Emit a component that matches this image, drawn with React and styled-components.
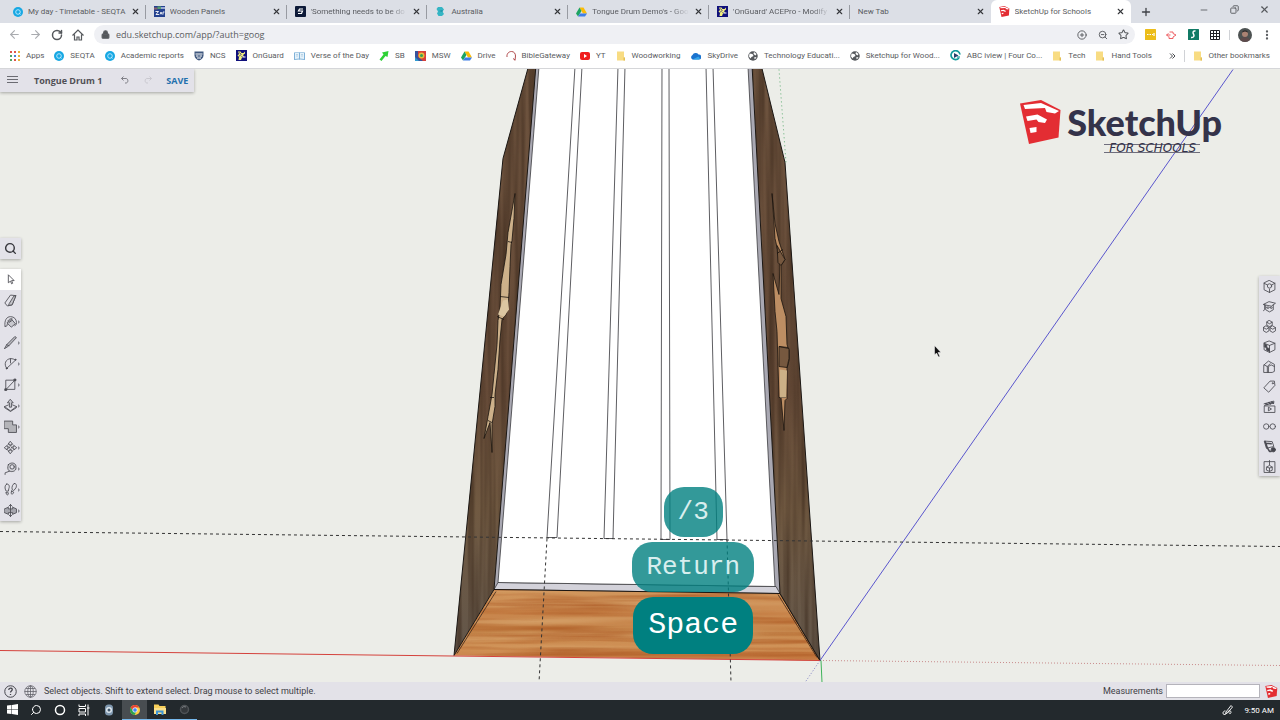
import React from 'react';
import styled, { createGlobalStyle } from 'styled-components';
import {
  ArrowLeft,
  ArrowRight,
  RotateCw,
  Lock,
  CirclePlus,
  ZoomOut,
  Star,
  Plus,
  X,
  Minus,
  Copy,
  EllipsisVertical,
  Search,
} from 'lucide-react';

const GlobalStyle = createGlobalStyle`
  * { box-sizing: border-box; }
  body {
    margin: 0;
    font-family: Roboto, 'Open Sans', sans-serif;
    font-size: 8px;
    color: #5a5c61;
    overflow: hidden;
  }
  button, input { font: inherit; color: inherit; margin: 0; padding: 0; border: 0; background: none; }
  a { color: inherit; text-decoration: none; }
  svg { display: block; flex: none; }
`;

/* ---------- small pictures ---------- */

function SeqtaIcon() {
  return (
    <svg width='10' height='10' viewBox='0 0 20 20'>
      <circle cx='10' cy='10' r='10' fill='#17a8e3' />
      <circle cx='10' cy='10' r='4.6' fill='none' stroke='#bfeaff' strokeWidth='1.8' />
      <path d='M12 12l3 3' stroke='#bfeaff' strokeWidth='1.8' />
    </svg>
  );
}

function ZartIcon() {
  return (
    <svg width='11' height='11' viewBox='0 0 22 22'>
      <rect width='22' height='22' fill='#23418f' />
      <path d='M0 3h7v4H0z' fill='#8a5f6d' />
      <path d='M7 1h7v5H7z' fill='#55a06f' />
      <path d='M14 2h8v4h-8z' fill='#9aa8d4' />
      <path d='M3 11h6l-5 6h6M12 17l2-5 2 5M18 17v-5h3' fill='none' stroke='#fff' strokeWidth='1.8' />
    </svg>
  );
}

function StileIcon() {
  return (
    <svg width='11' height='11' viewBox='0 0 22 22'>
      <rect width='22' height='22' rx='2' fill='#0d1a38' />
      <path d='M16 6H9l-2 4h8l-2 5H6' fill='none' stroke='#fff' strokeWidth='2.4' />
    </svg>
  );
}

function AustraliaIcon() {
  return (
    <svg width='11' height='11' viewBox='0 0 22 22'>
      <path d='M6 2h8l4 5-3 4 3 5-4 4H7l-3-5 2-4-3-5z' fill='#35b5c4' />
      <path d='M8 10l7-2v4z' fill='#1d8fa5' />
    </svg>
  );
}

function DriveIcon() {
  return (
    <svg width='11' height='10' viewBox='0 0 22 20'>
      <path d='M7 1h8l7 12h-8z' fill='#fbbc05' />
      <path d='M7 1l4 7-7 11-4-6z' fill='#1da462' />
      <path d='M8 13h14l-4 6H4z' fill='#3f7ee8' />
    </svg>
  );
}

function GuardIcon() {
  return (
    <svg width='11' height='11' viewBox='0 0 22 22'>
      <rect width='22' height='22' fill='#10107c' />
      <path d='M4 3h5l2 3h4l3-3v4l-4 3 2 3-4 2-2 5H5l1-6-3-3 3-3z' fill='#f3ef7c' />
      <path d='M7 5l3 4-4 4M11 12l5 5' fill='none' stroke='#10107c' strokeWidth='1.6' />
      <path d='M13 13h6v2h-6z' fill='#fff' />
    </svg>
  );
}

function SketchupMark({ size }) {
  return (
    <svg width={size} height={size} viewBox='0 0 84 88'>
      <path d='M0 7L42 0l39 20-4 55-59 13z' fill='#e32d33' />
      <path d='M7 10l35-4 36 16-8 5-17-3-3-8-40 2z' fill='#fff' />
      <path d='M12 33l23-4 19 10-4 7-13-2-4-5-18 3z' fill='#fff' />
      <path d='M19 56l14-2v10l-12 2z' fill='#fff' />
    </svg>
  );
}

function AppsIcon() {
  const fills = ['#e0544a', '#e0544a', '#e9b13c', '#4fa463', '#4c7fd8', '#e9b13c', '#4fa463', '#e0544a', '#e9b13c'];
  return (
    <svg width='10' height='10' viewBox='0 0 10 10'>
      {fills.map((fill, i) => (
        <rect key={i} x={(i % 3) * 4} y={Math.floor(i / 3) * 4} width='2' height='2' fill={fill} />
      ))}
    </svg>
  );
}

function ShieldIcon() {
  return (
    <svg width='10' height='10' viewBox='0 0 20 20'>
      <path d='M1 1h18v8c0 5-4 8-9 10-5-2-9-5-9-10z' fill='#40587f' />
      <path d='M3 6h14M4 10h5M11 10h5M6 14h8' stroke='#fff' strokeWidth='2' />
    </svg>
  );
}

function BookIcon() {
  return (
    <svg width='11' height='10' viewBox='0 0 22 20'>
      <path d='M0 3l10-1 1 1 1-1 10 1v15l-10-1-1 1-1-1-10 1z' fill='#7fb1d8' />
      <path d='M2 4l8-1v12l-8 1zM12 3l8 1v12l-8-1z' fill='#e4f1fa' />
      <path d='M4 7h4M4 10h4M14 7h4M14 10h4' stroke='#8fb5d2' />
    </svg>
  );
}

function SbIcon() {
  return (
    <svg width='10' height='10' viewBox='0 0 20 20'>
      <path d='M6 3l13-3-2 12-4-2-8 10-4-3 8-10z' fill='#2fd136' />
    </svg>
  );
}

function WeatherIcon() {
  return (
    <svg width='11' height='10' viewBox='0 0 22 20'>
      <rect width='22' height='20' fill='#38539b' />
      <path d='M6 0h16v20h-6L6 12z' fill='#d8403a' />
      <circle cx='13' cy='9' r='6' fill='#e9bd3a' />
      <circle cx='13' cy='9' r='3' fill='#38a15a' />
      <path d='M0 12l8 8H0z' fill='#2f9ad0' />
    </svg>
  );
}

function GatewayIcon() {
  return (
    <svg width='10' height='10' viewBox='0 0 20 20'>
      <path d='M2 12C1 5 6 1 11 1s8 4 8 9l-1 9M18 18l-4-3' fill='none' stroke='#a8383a' strokeWidth='1.8' />
    </svg>
  );
}

function YoutubeIcon() {
  return (
    <svg width='10' height='8' viewBox='0 0 20 16'>
      <rect width='20' height='16' rx='4' fill='#ef1c1c' />
      <path d='M8 4l6 4-6 4z' fill='#fff' />
    </svg>
  );
}

function FolderIcon() {
  return (
    <svg width='10' height='10' viewBox='0 0 20 20'>
      <path d='M2 1h14v12h2v6H2z' fill='#f8dc83' />
      <path d='M15 13h3v6h-3z' fill='#e3bf56' />
    </svg>
  );
}

function CloudIcon() {
  return (
    <svg width='11' height='8' viewBox='0 0 22 16'>
      <path d='M5 15a5 5 0 0 1 0-9 7 7 0 0 1 12-1 5 5 0 0 1 1 10z' fill='#1a73cf' />
      <path d='M5 15l12-6 3 4-2 2z' fill='#31a5ea' />
    </svg>
  );
}

function GlobeIcon() {
  return (
    <svg width='10' height='10' viewBox='0 0 20 20'>
      <circle cx='10' cy='10' r='9.5' fill='#55585c' />
      <path d='M3 5l6 1 2 4-4 2-2 3-3-4zM12 2l5 4-2 3-4-3zM12 13l5-1-3 5z' fill='#fff' />
    </svg>
  );
}

function IviewIcon() {
  return (
    <svg width='11' height='11' viewBox='0 0 22 22'>
      <path d='M18 16A9 9 0 1 1 20 9' fill='none' stroke='#129a9a' strokeWidth='3.4' />
      <path d='M8 6l9 5-9 5z' fill='#28406a' />
      <path d='M14 14h6' stroke='#129a9a' strokeWidth='2.4' />
    </svg>
  );
}

/* ---------- modelling tool icons, drawn on a 24 grid ---------- */

const ToolSvg = styled.svg.attrs({ viewBox: '0 0 24 24' })`
  width: 13px;
  height: 13px;
  fill: none;
  stroke: #4c4c54;
  stroke-width: 1.6;
  stroke-linejoin: round;
  stroke-linecap: round;
`;

const leftTools = [
  { name: 'Select', active: true, art: <path d='M8 4v14l4-3 2 5 2-1-2-5h4z' /> },
  {
    name: 'Eraser',
    more: false,
    art: (
      <>
        <path d='M2 16L12 2l10 1-7 17-8 2z' />
        <path d='M10 17l8-13 4-1-7 17-6 1z' fill='#c3c3c9' />
      </>
    ),
  },
  {
    name: 'Paint',
    art: (
      <>
        <path d='M2 21C0 10 5 3 12 3c7 0 11 5 11 11 0 4-2 6-3 6M2 21c3 1 4-1 4-4' />
        <path d='M6 14l8-6 7 8-7 6z' fill='#c9c9cf' />
        <path d='M7 11c2-3 5-5 8-4M9 14l6-4' />
      </>
    ),
  },
  { name: 'Pencil', art: <path d='M1 23l4-7L20 1l3 2L9 18zM5 16l4 2' fill='#b8b8be' /> },
  {
    name: 'Arc',
    art: (
      <>
        <path d='M5 21C-1 13 3 4 12 3c4 0 7 1 9 3L5 21z' />
        <path d='M12 3v8' />
        <circle cx='21' cy='5' r='1' fill='#45454d' />
        <circle cx='5' cy='21' r='1' fill='#45454d' />
      </>
    ),
  },
  {
    name: 'Rectangle',
    art: (
      <>
        <path d='M4 4h16v17H4zM4 21L20 4' />
        <path d='M2 20h3v3H2zM19 2h3v3h-3z' fill='#45454d' />
      </>
    ),
  },
  {
    name: 'Push/Pull',
    art: (
      <>
        <path d='M8 11l-7 3 11 8 11-8-7-3' />
        <path d='M12 1l5 6h-3v8h-4V7H7z' fill='#c9c9cf' />
        <path d='M1 14v2l11 7 11-7v-2' />
      </>
    ),
  },
  { name: 'Solid tools', art: <path d='M1 2h15v7h7v14H8v-7H1z' fill='#b4b4b9' /> },
  {
    name: 'Move',
    art: (
      <path d='M12 1l4 5h-3v3h-2V6H8zM12 23l4-5h-3v-3h-2v3H8zM1 12l5-4v3h4v2H6v3zM23 12l-5-4v3h-4v2h4v3z' />
    ),
  },
  {
    name: 'Tape measure',
    art: (
      <>
        <path d='M8 5c4-5 13-4 14 2v6c-2 5-9 6-13 3-2-2-3-6-1-11z' fill='#cfcfd5' />
        <circle cx='15' cy='9' r='4' fill='#e3e2e9' />
        <path d='M10 17l-8 3v3' />
      </>
    ),
  },
  {
    name: 'Walk',
    art: (
      <path d='M5 2c4-1 6 4 4 8l-1 5H4C1 10 1 4 5 2zM4 18h4c1 5-4 6-4 0zM19 1c4-1 5 4 3 8l-4 5-3-2c-1-5 1-10 4-11zM14 15l4 2c-2 6-7 4-4-2z' />
    ),
  },
  {
    name: 'Orbit',
    art: (
      <>
        <path d='M1 9l7-3v3h8V6l7 3v7l-7 3v-3H8v3l-7-3z' fill='#a6a6ae' />
        <path d='M12 1v22M9 4l3-3 3 3M9 20l3 3 3-3' />
      </>
    ),
  },
];

const rightTools = [
  {
    name: 'Entity info',
    art: (
      <>
        <path d='M12 1l10 5v12l-10 5-10-5V6zM2 6l6 3M22 6l-6 3M12 17v6' />
        <circle cx='12' cy='11' r='4' />
      </>
    ),
  },
  {
    name: 'Instructor',
    art: (
      <>
        <path d='M1 8l10-5 12 3-7 5zM5 10v8l7 4 7-4V9M3 8v9l-2 3' />
        <path d='M7 14c1-2 4-2 4 0s-3 3-4 0M13 14c1-2 4-2 4 0s-3 3-4 0' />
      </>
    ),
  },
  {
    name: 'Components',
    art: <path d='M12 1l5 3v6l-5 2-5-2V4zM6 11l5 3v6l-5 3-5-3v-6zM18 11l5 3v6l-5 3-5-3v-6zM7 4l5 3 5-3M1 14l5 3 5-3M13 14l5 3 5-3' />,
  },
  {
    name: 'Materials',
    art: (
      <>
        <path d='M12 2l10 4v12l-10 5-10-5V6zM12 10v13M2 6l10 4 10-4' />
        <path d='M3 7l4 2v5l-4-1zM7 14l5 2v5l-5-2z' fill='#45454d' />
      </>
    ),
  },
  { name: 'Styles', art: <path d='M2 9l8-7 11 6v13l-4 2H2zM2 9l6 3v11M8 12l5-5M10 23V12l5-3 6 3' /> },
  {
    name: 'Tags',
    art: (
      <>
        <path d='M2 14L13 2h8l1 8-11 12z' />
        <circle cx='18' cy='6' r='1' />
      </>
    ),
  },
  {
    name: 'Scenes',
    art: (
      <>
        <path d='M3 11h19v12H3zM2 7l18-5v3L3 10M10 14v6l5-3z' />
        <path d='M5 7l3 1M11 5l3 2M16 4l3 2' strokeWidth='3' />
      </>
    ),
  },
  {
    name: 'Display',
    art: (
      <>
        <circle cx='6' cy='12' r='5' />
        <circle cx='18' cy='12' r='5' />
      </>
    ),
  },
  {
    name: 'Soften edges',
    art: (
      <>
        <path d='M3 2l14 1 3 9-13 3z' />
        <path d='M6 6l9 1M4 3l4 12M9 16l3 5h3' strokeWidth='3' />
        <circle cx='19' cy='18' r='4' fill='#45454d' />
      </>
    ),
  },
  { name: 'Model info', art: <path d='M8 3H2v20h20V3h-6M12 1v8M9 3h6M7 13l5-3 5 3v6l-5 2-5-2zM7 13l5 2 5-2M12 15v6' /> },
];

/* ---------- layout ---------- */

const Page = styled.div`
  display: flex;
  flex-direction: column;
  height: 100vh;
`;

const TabStrip = styled.header`
  display: flex;
  height: 23px;
  background: #dcdfe6;
`;

const TabList = styled.div`
  display: grid;
  grid-template-columns: repeat(8, minmax(0, 1fr));
  width: 88%;
  margin-left: 5px;
`;

const Tab = styled.div`
  display: flex;
  align-items: center;
  gap: 5px;
  padding: 0 5px 0 8px;
  border-radius: 6px 6px 0 0;
  background: ${(props) => (props.$active ? '#fff' : 'none')};
  &::after {
    content: '';
    width: 1px;
    height: 14px;
    margin: 0 -5px 0 0;
    background: ${(props) => (props.$line ? '#989ba2' : 'transparent')};
  }
`;

const TabTitle = styled.button`
  flex: 1;
  min-width: 0;
  overflow: hidden;
  text-align: left;
  white-space: nowrap;
  line-height: 12px;
  mask-image: ${(props) => (props.$fade ? 'linear-gradient(to right, #000 82%, transparent)' : 'none')};
`;

const IconButton = styled.button`
  display: flex;
  align-items: center;
  justify-content: center;
  width: ${(props) => props.$width || 21}px;
  height: ${(props) => props.$height || 21}px;
  color: ${(props) => props.$color || '#55585c'};
`;

const WindowButtons = styled.div`
  display: flex;
  margin-left: auto;
  padding-right: 2px;
`;

const Toolbar = styled.div`
  display: flex;
  align-items: center;
  height: 23px;
  padding: 0 6px 0 4px;
  background: #fff;
`;

const AddressBar = styled.div`
  display: flex;
  flex: 1;
  align-items: center;
  height: 19px;
  margin-left: 6px;
  padding: 0 1px 0 7px;
  border-radius: 10px;
  background: #eff0f4;
`;

const AddressInput = styled.input`
  flex: 1;
  min-width: 0;
  margin-left: 6px;
  font-family: 'Open Sans', sans-serif;
  font-size: 9px;
  outline: 0;
`;

const Divider = styled.span`
  width: 1px;
  height: ${(props) => props.$height || 10}px;
  margin-left: ${(props) => props.$before || 0}px;
  background: #d0d2d6;
`;

const Avatar = styled.svg`
  width: 14px;
  height: 14px;
  margin: 0 8px;
`;

const BookmarkBar = styled.nav`
  display: flex;
  align-items: center;
  gap: 10px;
  height: 23px;
  padding: 0 10px 3px;
  border-bottom: 1px solid #d5d6d9;
  background: #fff;
`;

const Bookmark = styled.a`
  display: flex;
  align-items: center;
  gap: 6px;
  white-space: nowrap;
`;

const BookmarkEnd = styled.div`
  display: flex;
  align-items: center;
  gap: 8px;
  margin-left: auto;
`;

const Workspace = styled.main`
  position: relative;
  flex: 1;
  min-height: 0;
  overflow: hidden;
  background: #ecede8;
`;

const Model = styled.svg`
  width: 100%;
  height: 100%;
`;

const Panel = styled.div`
  position: absolute;
  background: #e3e2e9;
  box-shadow: 0 1px 3px rgba(0, 0, 0, 0.3);
`;

const FilePanel = styled(Panel)`
  top: 0;
  left: 0;
  display: flex;
  align-items: center;
  height: 23px;
  padding: 0 6px 1px 2px;
`;

const FileName = styled.h1`
  margin: 0 10px 0 11px;
  font: 700 9px 'Open Sans', sans-serif;
  color: #515056;
`;

const SaveButton = styled.button`
  margin-left: 8px;
  font: 700 9px 'Open Sans', sans-serif;
  color: #2370ad;
`;

const SearchPanel = styled(Panel)`
  left: 0;
  top: 169px;
`;

const LeftTools = styled(Panel)`
  left: 0;
  top: 200px;
`;

const RightTools = styled(Panel)`
  right: 0;
  top: 207px;
`;

const ToolButton = styled.button`
  position: relative;
  display: flex;
  align-items: center;
  justify-content: center;
  width: 21px;
  height: ${(props) => props.$height || 21}px;
  background: ${(props) => (props.$active ? '#fff' : 'none')};
`;

const MoreMark = styled.span`
  position: absolute;
  right: 1px;
  top: 9px;
  border: 2px solid transparent;
  border-right: 0;
  border-left-color: #8c8c93;
`;

const Brand = styled.div`
  position: absolute;
  top: 31px;
  right: 58px;
  display: grid;
  grid-template-columns: auto auto;
  column-gap: 4px;
`;

const BrandName = styled.div`
  font: 900 36px/44px Lato, 'Open Sans', sans-serif;
  color: #34334a;
`;

const BrandSub = styled.div`
  grid-column: 2;
  justify-self: end;
  margin-right: 22px;
  padding: 0 4px 0 5px;
  border-top: 1px solid #6f6e7c;
  border-bottom: 1px solid #6f6e7c;
  font: italic 200 12px/7px 'DejaVu Sans', sans-serif;
  color: #34334a;
`;

const KeyStack = styled.div`
  position: absolute;
  left: 54%;
  bottom: 28px;
  display: flex;
  flex-direction: column;
  align-items: center;
  gap: 5px;
  width: 124px;
  margin-left: -60px;
`;

const Key = styled.kbd`
  padding: 0 ${(props) => (props.$fresh ? 15 : 14)}px;
  border-radius: 20px;
  background: ${(props) => (props.$fresh ? '#008080' : 'rgba(0, 128, 128, 0.8)')};
  color: ${(props) => (props.$fresh ? '#fff' : '#d8eeee')};
  font-family: 'Liberation Mono', monospace;
  font-size: ${(props) => (props.$fresh ? 30 : 26)}px;
  line-height: ${(props) => (props.$fresh ? 57 : 50)}px;
`;

const Pointer = styled.svg`
  position: absolute;
  left: 73%;
  top: 276px;
`;

const StatusBar = styled.footer`
  display: flex;
  align-items: center;
  height: 18px;
  padding: 0 2px 0 4px;
  background: #e3e2e8;
  font-size: 9px;
  color: #3f3f46;
`;

const MeasureLabel = styled.label`
  margin-left: auto;
`;

const MeasureInput = styled.input`
  width: 94px;
  height: 14px;
  margin: 0 5px 0 3px;
  border: 1px solid #b5b4bb;
  background: #fff;
`;

const Taskbar = styled.div`
  display: flex;
  height: 20px;
  background: #23292d;
  color: #fff;
`;

const TaskButton = styled.button`
  display: flex;
  align-items: center;
  justify-content: center;
  width: ${(props) => props.$width || 24}px;
  border-bottom: 1px solid ${(props) => (props.$open ? '#76b9ed' : 'transparent')};
  background: ${(props) => (props.$active ? '#484d51' : 'none')};
`;

const Tray = styled.div`
  display: flex;
  align-items: center;
  gap: 11px;
  margin-left: auto;
  padding-right: 6px;
`;

const tabs = [
  { title: 'My day - Timetable - SEQTA', icon: <SeqtaIcon /> },
  { title: 'Wooden Panels', icon: <ZartIcon /> },
  { title: "'Something needs to be do", icon: <StileIcon />, fade: true },
  { title: 'Australia', icon: <AustraliaIcon /> },
  { title: "Tongue Drum Demo's - Goo", icon: <DriveIcon />, fade: true },
  { title: "'OnGuard' ACEPro - Modify", icon: <GuardIcon />, fade: true },
  { title: 'New Tab' },
  { title: 'SketchUp for Schools', icon: <SketchupMark size='11' />, active: true },
];

const bookmarks = [
  { label: 'Apps', icon: <AppsIcon /> },
  { label: 'SEQTA', icon: <SeqtaIcon /> },
  { label: 'Academic reports', icon: <SeqtaIcon /> },
  { label: 'NCS', icon: <ShieldIcon /> },
  { label: 'OnGuard', icon: <GuardIcon /> },
  { label: 'Verse of the Day', icon: <BookIcon /> },
  { label: 'SB', icon: <SbIcon /> },
  { label: 'MSW', icon: <WeatherIcon /> },
  { label: 'Drive', icon: <DriveIcon /> },
  { label: 'BibleGateway', icon: <GatewayIcon /> },
  { label: 'YT', icon: <YoutubeIcon /> },
  { label: 'Woodworking', icon: <FolderIcon /> },
  { label: 'SkyDrive', icon: <CloudIcon /> },
  { label: 'Technology Educati...', icon: <GlobeIcon /> },
  { label: 'Sketchup for Wood...', icon: <GlobeIcon /> },
  { label: 'ABC iview | Four Co...', icon: <IviewIcon /> },
  { label: 'Tech', icon: <FolderIcon /> },
  { label: 'Hand Tools', icon: <FolderIcon /> },
];

function BrowserTop() {
  return (
    <>
      <TabStrip>
        <TabList role='tablist'>
          {tabs.map((tab, i) => (
            <Tab key={tab.title} $active={tab.active} $line={i < tabs.length - 2}>
              {tab.icon}
              <TabTitle role='tab' aria-selected={!!tab.active} $fade={tab.fade}>
                {tab.title}
              </TabTitle>
              <IconButton $width={9} $height={12} $color='#35363a' aria-label='Close tab'>
                <X size={9} strokeWidth={3} />
              </IconButton>
            </Tab>
          ))}
        </TabList>
        <IconButton $width={30} $height={23} aria-label='New tab'>
          <Plus size={12} strokeWidth={2.6} color='#3f4247' />
        </IconButton>
        <WindowButtons>
          <IconButton $width={30} $height={19} aria-label='Minimise'>
            <Minus size={10} strokeWidth={2} />
          </IconButton>
          <IconButton $width={31} $height={19} aria-label='Restore'>
            <Copy size={9} strokeWidth={2.4} style={{ transform: 'scaleX(-1)' }} />
          </IconButton>
          <IconButton $width={28} $height={19} aria-label='Close'>
            <X size={11} strokeWidth={2.4} />
          </IconButton>
        </WindowButtons>
      </TabStrip>
      <Toolbar>
        <IconButton $color='#a9abaf' aria-label='Back'>
          <ArrowLeft size={13} strokeWidth={2} />
        </IconButton>
        <IconButton $color='#a9abaf' aria-label='Forward'>
          <ArrowRight size={13} strokeWidth={2} />
        </IconButton>
        <IconButton aria-label='Reload'>
          <RotateCw size={12} strokeWidth={3} />
        </IconButton>
        <IconButton aria-label='Home'>
          <svg width='12' height='12' viewBox='0 0 24 24' fill='none' stroke='#55585c' strokeWidth='2.4'>
            <path d='M1 13L12 2l11 11M5 11v11h5v-6h4v6h5V11' />
          </svg>
        </IconButton>
        <AddressBar>
          <Lock size={9} strokeWidth={3} fill='#55585c' />
          <AddressInput aria-label='Address' defaultValue='edu.sketchup.com/app/?auth=goog' />
          <IconButton aria-label='Install'>
            <CirclePlus size={10} strokeWidth={2.2} />
          </IconButton>
          <IconButton aria-label='Zoom'>
            <ZoomOut size={10} strokeWidth={2.2} />
          </IconButton>
          <IconButton aria-label='Bookmark this page'>
            <Star size={11} strokeWidth={2.2} />
          </IconButton>
        </AddressBar>
        <IconButton $width={30} aria-label='Password manager'>
          <svg width='11' height='11' viewBox='0 0 22 22'>
            <rect width='22' height='22' rx='1' fill='#ecbd1a' />
            <path d='M4 11h3M9 11h3M14 11h2M18 8v6' stroke='#fff' strokeWidth='2.4' />
          </svg>
        </IconButton>
        <IconButton $width={13} aria-label='Screen share'>
          <svg width='11' height='10' viewBox='0 0 22 20' fill='none' stroke='#ee6065' strokeWidth='2'>
            <path d='M7 4h7v3l6 3-6 4v3H6v-4M1 10h8M5 7l-4 3 4 3' />
          </svg>
        </IconButton>
        <IconButton $width={30} aria-label='Stylus'>
          <svg width='11' height='11' viewBox='0 0 22 22'>
            <rect width='22' height='22' rx='1' fill='#117a65' />
            <path d='M15 4c-5-1-6 3-4 6s1 8-5 7' fill='none' stroke='#fff' strokeWidth='3' />
          </svg>
        </IconButton>
        <IconButton $width={13} aria-label='Grid'>
          <svg width='10' height='10' viewBox='0 0 20 20' fill='none' stroke='#202124' strokeWidth='2'>
            <path d='M1 1h18v18H1zM7 1v18M13 1v18M1 7h18M1 13h18' />
          </svg>
        </IconButton>
        <Divider $before={8} />
        <Avatar viewBox='0 0 28 28' role='img' aria-label='Profile'>
          <circle cx='14' cy='14' r='14' fill='#4d5252' />
          <circle cx='14' cy='12' r='6' fill='#aa8273' />
          <path d='M8 9c1-6 11-6 12 0l-6-2z' fill='#2f2c2c' />
          <path d='M4 24c3-8 17-8 20 0-6 5-14 5-20 0z' fill='#5d4a4b' />
        </Avatar>
        <IconButton $width={14} aria-label='Menu'>
          <EllipsisVertical size={12} strokeWidth={2.6} />
        </IconButton>
      </Toolbar>
      <BookmarkBar>
        {bookmarks.map((item) => (
          <Bookmark key={item.label} href='#'>
            {item.icon}
            {item.label}
          </Bookmark>
        ))}
        <BookmarkEnd>
          <svg width='7' height='6' viewBox='0 0 14 12' fill='none' stroke='#4a4c50' strokeWidth='2'>
            <path d='M2 1l5 5-5 5M7 1l5 5-5 5' />
          </svg>
          <Divider $height={12} />
          <Bookmark href='#'>
            <FolderIcon />
            Other bookmarks
          </Bookmark>
        </BookmarkEnd>
      </BookmarkBar>
    </>
  );
}

function DrumModel() {
  return (
    <Model viewBox='0 68 1280 614' preserveAspectRatio='xMidYMid slice' role='img' aria-label='Tongue drum model'>
      <defs>
        <linearGradient id='side' x1='0' x2='0' y1='0' y2='1'>
          <stop offset='0' stopColor='#6d533e' />
          <stop offset='0.55' stopColor='#664b38' />
          <stop offset='0.75' stopColor='#715a42' />
          <stop offset='1' stopColor='#62564a' />
        </linearGradient>
        <linearGradient id='floor' x1='0' x2='0' y1='0' y2='1'>
          <stop offset='0' stopColor='#d39a60' />
          <stop offset='0.35' stopColor='#c47c42' />
          <stop offset='0.6' stopColor='#c28146' />
          <stop offset='0.85' stopColor='#cf8b4e' />
          <stop offset='1' stopColor='#bf6f38' />
        </linearGradient>
        <filter id='sideGrain' x='0' y='0' width='1' height='1' colorInterpolationFilters='sRGB'>
          <feTurbulence type='fractalNoise' baseFrequency='0.16 0.006' numOctaves='2' seed='4' />
          <feColorMatrix values='0 0 0 0 0.22  0 0 0 0 0.15  0 0 0 0 0.1  1.4 0 0 0 -0.5' />
          <feComposite operator='in' in2='SourceGraphic' />
        </filter>
        <filter id='floorGrain' x='0' y='0' width='1' height='1' colorInterpolationFilters='sRGB'>
          <feTurbulence type='fractalNoise' baseFrequency='0.006 0.16' numOctaves='3' seed='8' />
          <feColorMatrix values='0 0 0 0 0.68  0 0 0 0 0.36  0 0 0 0 0.15  2 0 0 0 -0.9' />
          <feComposite operator='in' in2='SourceGraphic' />
        </filter>
        <filter id='floorLight' x='0' y='0' width='1' height='1' colorInterpolationFilters='sRGB'>
          <feTurbulence type='fractalNoise' baseFrequency='0.004 0.12' numOctaves='2' seed='21' />
          <feColorMatrix values='0 0 0 0 0.83  0 0 0 0 0.62  0 0 0 0 0.4  2.2 0 0 0 -0.8' />
          <feComposite operator='in' in2='SourceGraphic' />
        </filter>
      </defs>

      {/* axes behind the box */}
      <path d='M779 69L786 162' stroke='#5fae74' strokeDasharray='1 3' fill='none' />
      <path d='M820 660L1280 665' stroke='#c98b8b' strokeDasharray='1 2' />
      <path d='M820 660L805 682' stroke='#7d7dc4' strokeDasharray='1 2' />

      {/* tongue board */}
      <path d='M535 66h217l28 527-286-4z' fill='#a9a8b2' />
      <path d='M498 582l278 4 4 7-286-4z' fill='#d3d2da' stroke='#3a3a3e' strokeWidth='0.8' />
      <path d='M539 66h209l27 520-277-4z' fill='#fff' stroke='#3a3a3e' strokeWidth='0.8' />
      <g fill='none' stroke='#4c4c50' strokeWidth='0.9'>
        <path d='M575 66L547 537h10L582 66' />
        <path d='M618 66L604 538h9L625 66' />
        <path d='M662 66L661 539h9L669 66' />
        <path d='M706 66L717 539h10L713 66' />
      </g>

      {/* end board */}
      <path d='M494 589l286 4 40 67-366-5z' fill='url(#floor)' />
      <path d='M494 589l286 4 40 67-366-5z' filter='url(#floorLight)' />
      <path d='M494 589l286 4 40 67-366-5z' filter='url(#floorGrain)' />
      <path d='M494 589l286 4 40 67' fill='none' stroke='#1c1511' />
      <path d='M496 591L457 653M778 594L817 657' stroke='#3c2618' strokeWidth='0.8' />

      {/* side boards */}
      {['M529 64L503 158 454 655 494 589 536 64z', 'M752 64h9l24 98 35 498-40-67z'].map((shape) => (
        <g key={shape}>
          <path d={shape} fill='url(#side)' />
          <path d={shape} filter='url(#sideGrain)' />
          <path d={shape} fill='none' stroke='#1b1714' />
        </g>
      ))}

      {/* sound holes */}
      <g stroke='#1b140f' strokeWidth='0.8'>
        <path
          d='M515 193l-1 25-2 22-1 4 -1 22-1 26-1 15-2 7-4 5-2 20-2 30-3 25v12l-3 18 0 28-2-30-6 16 4-22 4-22 2-20 3-30 1-24 2-12 1-24 5-30 2-22z'
          fill='#cdb18a'
        />
        <path d='M772 193l3 30 4 18 6 18-4 6v33l5 18 1 28 2 6v10l-2 8v30l-2 2-1 30-3-33h-2l-1-32-1-34-2-20-2-38 6 21 1-34-5-22z' fill='#bd8e63' />
        <path d='M777 245l8 14-4 6-3-3zM779 346l10 2v10l-2 9-8-1z' fill='#76583f' />
        <path d='M508 241l4 1M500 296l9 1M497 316l7 3M490 397h4M488 420l4 2M779 346l9 1M780 397h6M777 253l6-4' fill='none' />
        <path d='M503 300l5-1 1 10-5 7-6-2z' fill='#dcc7a2' stroke='none' />
        <path d='M780 369l7 1-1 27h-6z' fill='#ccb187' stroke='none' />
      </g>

      {/* axes and guides */}
      <path d='M0 650L820 660' stroke='#d4423c' />
      <path d='M820 660L1233 69' stroke='#5a56cd' />
      <path d='M821 660l1 22' stroke='#3fb35a' />
      <g stroke='#333' strokeDasharray='3 3'>
        <path d='M0 531L1280 546' />
        <path d='M547 538L539 682M727 539L731 682' />
      </g>
    </Model>
  );
}

function TaskIcons() {
  return (
    <>
      <TaskButton aria-label='Start'>
        <svg width='11' height='11' viewBox='0 0 22 22'>
          <path d='M0 3l9-1v8H0zM10 2l12-2v10H10zM0 11h9v9l-9-1zM10 11h12v11l-12-2z' fill='#fff' />
        </svg>
      </TaskButton>
      <TaskButton aria-label='Search'>
        <Search size={12} strokeWidth={2} style={{ transform: 'scaleX(-1)' }} />
      </TaskButton>
      <TaskButton aria-label='Cortana'>
        <svg width='12' height='12' viewBox='0 0 24 24'>
          <circle cx='12' cy='12' r='9' fill='none' stroke='#fff' strokeWidth='3' />
        </svg>
      </TaskButton>
      <TaskButton aria-label='Task view'>
        <svg width='12' height='12' viewBox='0 0 24 24' fill='none' stroke='#fff' strokeWidth='2'>
          <path d='M2 1v4h13V1M2 9h13v7H2zM2 24v-4h13v4M20 1v22M18 8h5' />
        </svg>
      </TaskButton>
      <TaskButton $width={26} aria-label='Camera app'>
        <svg width='10' height='12' viewBox='0 0 20 24'>
          <rect x='2' y='1' width='16' height='22' rx='7' fill='#7f97ae' />
          <circle cx='10' cy='12' r='6' fill='#dfe8ef' />
          <circle cx='10' cy='12' r='3' fill='#3f566c' />
        </svg>
      </TaskButton>
      <TaskButton $width={25} $open $active aria-label='Chrome'>
        <svg width='10' height='10' viewBox='0 0 20 20'>
          <circle cx='10' cy='10' r='10' fill='#ffcd40' />
          <path d='M1.300 5A10 10 0 0 1 18.700 5H10L6 12z' fill='#e84335' />
          <path d='M1.300 5A10 10 0 0 0 9 20l4-7-6 0z' fill='#2aa350' />
          <circle cx='10' cy='10' r='4.500' fill='#4285f4' stroke='#fff' strokeWidth='1.500' />
        </svg>
      </TaskButton>
      <TaskButton $width={25} $open aria-label='File Explorer'>
        <svg width='12' height='11' viewBox='0 0 24 22'>
          <path d='M0 1h9l2 3h12v16H0z' fill='#f7cf5a' />
          <path d='M0 8h24v12H0z' fill='#fbe08b' />
          <path d='M4 22v-9h15v9h-4v-5H8v5z' fill='#3e95d6' />
        </svg>
      </TaskButton>
      <TaskButton $width={25} $open aria-label='Recorder'>
        <svg width='11' height='11' viewBox='0 0 22 22'>
          <circle cx='11' cy='11' r='8' fill='#33373b' stroke='#4f5357' strokeWidth='3' />
          <path d='M6 8a6 6 0 0 1 8-2' stroke='#7a7e82' strokeWidth='2' fill='none' />
        </svg>
      </TaskButton>
    </>
  );
}

export default function App() {
  return (
    <Page>
      <GlobalStyle />
      <BrowserTop />
      <Workspace>
        <DrumModel />

        <Brand>
          <SketchupMark size='44' />
          <BrandName>SketchUp</BrandName>
          <BrandSub>FOR SCHOOLS</BrandSub>
        </Brand>

        <FilePanel>
          <IconButton aria-label='Menu'>
            <svg width='12' height='8' viewBox='0 0 12 8' stroke='#6b6b72' strokeWidth='1'>
              <path d='M0 0.5h11M0 3.5h11M0 6.5h11' />
            </svg>
          </IconButton>
          <FileName>Tongue Drum 1</FileName>
          <IconButton $width={25} aria-label='Undo'>
            <svg width='8' height='8' viewBox='0 0 16 16' fill='none' stroke='#74747b' strokeWidth='1.8'>
              <path d='M5 1L1 5l4 4M1 5h9c5 0 5 9 0 9H8' />
            </svg>
          </IconButton>
          <IconButton aria-label='Redo'>
            <svg width='8' height='8' viewBox='0 0 16 16' fill='none' stroke='#c6c5cc' strokeWidth='1.8'>
              <path d='M11 1l4 4-4 4M15 5H6c-5 0-5 9 0 9h2' />
            </svg>
          </IconButton>
          <SaveButton>SAVE</SaveButton>
        </FilePanel>

        <SearchPanel>
          <ToolButton aria-label='Search tools'>
            <Search size={13} strokeWidth={2.6} color='#36363c' />
          </ToolButton>
        </SearchPanel>

        <LeftTools role='toolbar' aria-label='Drawing tools'>
          {leftTools.map((tool) => (
            <ToolButton key={tool.name} aria-label={tool.name} $active={tool.active}>
              <ToolSvg>{tool.art}</ToolSvg>
              {!tool.active && tool.more !== false && <MoreMark />}
            </ToolButton>
          ))}
        </LeftTools>

        <RightTools role='toolbar' aria-label='Panels'>
          {rightTools.map((tool) => (
            <ToolButton key={tool.name} aria-label={tool.name} $height={20}>
              <ToolSvg>{tool.art}</ToolSvg>
            </ToolButton>
          ))}
        </RightTools>

        <Pointer width='8' height='13' viewBox='0 0 16 26'>
          <path d='M1 1v19l4-4 4 8 3-1-4-8h6z' fill='#111' stroke='#fff' strokeWidth='1' />
        </Pointer>

        <KeyStack>
          <Key>/3</Key>
          <Key>Return</Key>
          <Key $fresh>Space</Key>
        </KeyStack>
      </Workspace>

      <StatusBar>
        <IconButton $width={13} $height={18} aria-label='Help'>
          <svg width='13' height='13' viewBox='0 0 26 26' fill='none' stroke='#45454d' strokeWidth='2'>
            <circle cx='13' cy='13' r='11.500' />
            <path d='M9.500 10c0-5 7-5 7-1 0 3-3.500 3-3.500 6M13 18v2' strokeWidth='2.600' />
          </svg>
        </IconButton>
        <IconButton $width={27} $height={18} aria-label='Language'>
          <svg width='13' height='13' viewBox='0 0 26 26' fill='none' stroke='#5d5d65' strokeWidth='1.500'>
            <circle cx='13' cy='13' r='11.500' />
            <ellipse cx='13' cy='13' rx='5.500' ry='11.500' />
            <path d='M13 1v24M1 13h24M4 7h18M4 19h18' />
          </svg>
        </IconButton>
        <span>Select objects. Shift to extend select. Drag mouse to select multiple.</span>
        <MeasureLabel htmlFor='measurements'>Measurements</MeasureLabel>
        <MeasureInput id='measurements' />
        <SketchupMark size='13' />
      </StatusBar>

      <Taskbar>
        <TaskIcons />
        <Tray>
          <svg width='11' height='12' viewBox='0 0 22 24' fill='none' stroke='#fff' strokeWidth='1.800'>
            <path d='M8 16L18 3l3 3-10 12-4 1zM7 14c-5-1-7 6-3 7s6-4 8-6 7-2 6 2-4 2-4 0' />
          </svg>
          <time>9:50 AM</time>
        </Tray>
      </Taskbar>
    </Page>
  );
}
